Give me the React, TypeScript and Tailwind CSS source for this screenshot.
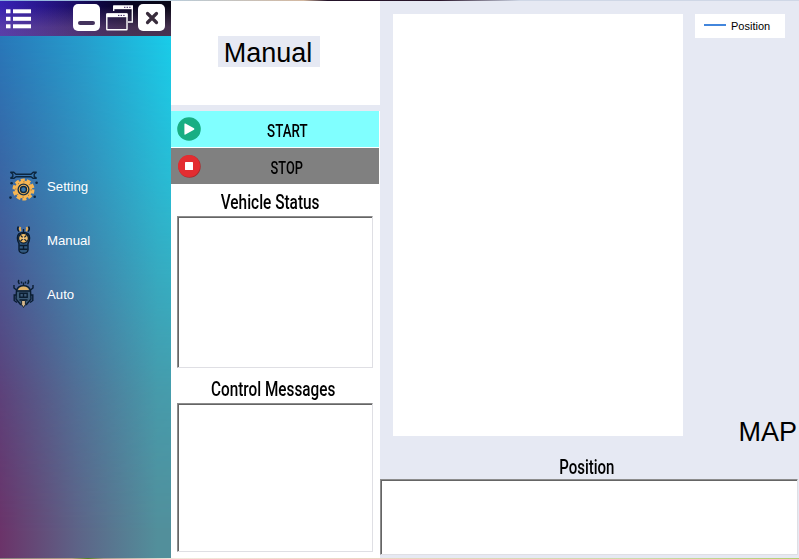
import React from "react";

const sans = "font-['Liberation_Sans',Arial,sans-serif]";

function Condensed({ text, width, scale }: { text: string; width: string; scale: string }) {
  return (
    <span className={`inline-flex justify-center ${width}`}>
      <span className={`whitespace-nowrap font-['Roboto',sans-serif] leading-6 font-medium ${scale}`}>{text}</span>
    </span>
  );
}

function SunkenBox({ size }: { size: string }) {
  return (
    <div
      className={`shrink-0 border border-t-[#8c8c8c] border-l-[#8c8c8c] border-r-[#dfdfe4] border-b-[#dfdfe4] bg-white shadow-[inset_1px_1px_0_#656565] ${size}`}
    />
  );
}

function ListIcon() {
  return (
    <svg width="25" height="20" viewBox="0 0 25 20" fill="white" className="shrink-0">
      {[0, 7.5, 15].map((y) => (
        <g key={y}>
          <rect x="0" y={y + 0.3} width="4.5" height="4" />
          <rect x="7" y={y + 0.3} width="18" height="4" />
        </g>
      ))}
    </svg>
  );
}

function WindowsIcon() {
  return (
    <svg width="27" height="26" viewBox="0 0 27 26" fill="none" stroke="white" className="shrink-0">
      <path d="M7.7 6V1.2H26.3V17H22" strokeWidth="1.3" />
      <path d="M7.5 0.5H27V4.2H7.5Z" fill="white" stroke="none" />
      <path d="M18 2.3h7" stroke="#39205f" strokeWidth="1" strokeDasharray="1.4 1.2" />
      <rect x="0.8" y="9" width="20.2" height="15.8" rx="0.5" strokeWidth="1.4" />
      <path d="M0.5 8.5H21.5V12.2H0.5Z" fill="white" stroke="none" />
      <path d="M12 10.4h7.5" stroke="#39205f" strokeWidth="1" strokeDasharray="1.4 1.2" />
    </svg>
  );
}

function SettingIcon() {
  return (
    <svg width="30" height="30" viewBox="0 0 30 30" fill="none" stroke="#0c263f">
      <path
        d="M1.3 1.2H4.8L7 3.2H22L24.2 1.2H27.7M1.3 7.4H4.8L7 5.8H22L24.2 7.4H27.7M1.3 1.2L3.8 3V5.6L1.3 7.4M27.7 1.2L25.2 3V5.6L27.7 7.4"
        strokeWidth="1.4"
        strokeLinejoin="round"
      />
      <circle cx="14.5" cy="18.5" r="9.3" stroke="#f6b654" strokeWidth="3.4" strokeDasharray="3.9 1.943" />
      <circle cx="14.5" cy="18.5" r="8.9" fill="#f6b654" stroke="none" />
      <circle cx="14.5" cy="18.5" r="7.7" stroke="#84602f" strokeWidth="1" strokeDasharray="1 5" />
      <circle cx="14.5" cy="18.5" r="5.4" stroke="#162e43" strokeWidth="1.3" />
      <circle cx="14.5" cy="18.5" r="3" fill="#3976a9" strokeWidth="1.4" />
      <g fill="#0c263f" stroke="none">
        <circle cx="2.6" cy="12.3" r="1.3" />
        <circle cx="27.6" cy="11.7" r="1.3" />
        <circle cx="1.5" cy="26.6" r="1.3" />
        <circle cx="25.7" cy="25.8" r="1.3" />
      </g>
    </svg>
  );
}

function RemoteIcon() {
  return (
    <svg width="30" height="30" viewBox="0 0 30 30" fill="none" stroke="#0a1c30" strokeWidth="1.4">
      <path d="M9.5 1.5Q7.5 4 10 6.5M19.5 1.5Q21.5 4 19 6.5" />
      <path d="M11.5 2Q10 4 12 6M17.5 2Q19 4 17 6" stroke="#e5ad58" strokeWidth="1.8" />
      <path d="M14.5 4V7" />
      <path d="M10 18.5Q8.4 16 8.4 13Q8.4 7.5 14.5 7.5Q20.6 7.5 20.6 13Q20.6 16 19 18.5V25Q18.5 28.2 14.5 28.2Q10.5 28.2 10 25Z" fill="#31587f" />
      <circle cx="14.5" cy="13.2" r="4.9" fill="#f0bc66" strokeWidth="1.2" />
      <path d="M11.6 10.3L17.4 16.1M17.4 10.3L11.6 16.1" strokeWidth="1.2" />
      <circle cx="14.5" cy="13.2" r="1.3" fill="#f8cf8d" stroke="none" />
      <path d="M10.5 20.5H18.5M14.5 20.5V24M10.5 24.2H18.5" />
    </svg>
  );
}

function RobotIcon() {
  return (
    <svg width="30" height="30" viewBox="0 0 30 30" fill="none" stroke="#0a1d31" strokeWidth="1.4">
      <path d="M10 1Q8.5 3 10.5 5M19 1Q20.5 3 18.5 5M12.5 2.5V4.5M16.5 2.5V4.5M14.5 3.5V7" />
      <path d="M7.5 11.5Q9 6.8 14.5 6.8Q20 6.8 21.5 11.5L22 20L17.5 25.5H11.5L7 20Z" fill="#3c5976" />
      <path d="M8.8 11.3Q10 7.5 14.5 7.5Q19 7.5 20.2 11.3Z" fill="#e0b066" stroke="none" />
      <path d="M7.5 12H21.5M10.8 14.2H18.2V18.3H10.8ZM14.5 14.2V18.3M10.5 21H18.5" />
      <path d="M7.5 11L5 9V6M21.5 11L24 9V6M7 16H5.2V21.5L8 23.5M22 16H23.8V21.5L21 23.5" />
      <path d="M12.6 21.5H16.4V25.5L14.5 28.5L12.6 25.5Z" fill="#d8b88c" strokeWidth="0.9" />
    </svg>
  );
}

const items = [
  { label: "Setting", Icon: SettingIcon },
  { label: "Manual", Icon: RemoteIcon },
  { label: "Auto", Icon: RobotIcon },
];

function Sidebar() {
  return (
    <aside className="flex w-[171px] shrink-0 flex-col">
      <header className="flex h-[35px] shrink-0 items-start bg-[linear-gradient(to_bottom,transparent_15%,#7a568088_75%,#7a568090),linear-gradient(to_right,#1d0a9c,#150764_38%,#07051f_78%,#080615)]">
        <div className="flex h-full w-full bg-[linear-gradient(to_right,#6a50e055,transparent_60%)]">
          <div className="mt-[8px] ml-1.5">
            <ListIcon />
          </div>
          <div className="mt-[3px] ml-[42px] flex h-[27px] w-[27px] items-end justify-center rounded-[5px] bg-white pb-[6px]">
            <div className="h-[4px] w-[17px] rounded-sm bg-[#44335d]" />
          </div>
          <div className="mt-[4px] ml-[6px]">
            <WindowsIcon />
          </div>
          <div className="mt-[3px] ml-[5px] flex h-[27px] w-[27px] items-center justify-center rounded-[5px] bg-white">
            <svg width="14" height="14" viewBox="0 0 14 14" stroke="#382c3c" strokeWidth="3.2" strokeLinecap="round">
              <path d="M2.5 2.5L11.5 11.5M11.5 2.5L2.5 11.5" />
            </svg>
          </div>
        </div>
      </header>
      <div className="grid flex-1 bg-[linear-gradient(to_right,#2878ba,#259fce_50%,#19cdea)]">
        <div className="col-start-1 row-start-1 bg-[linear-gradient(to_right,#6b3369,#5d6387_45%,#528f9b_92%)] [mask-image:linear-gradient(to_bottom,transparent,rgba(0,0,0,0.27)_27%,rgba(0,0,0,0.8)_69%,black_95%)]" />
        <nav className="z-10 col-start-1 row-start-1 flex flex-col gap-6 pt-[135px] pl-[9px]">
          {items.map(({ label, Icon }) => (
            <div key={label} className={`flex h-[30px] items-center gap-2 text-[13.2px] text-white ${sans}`}>
              <Icon />
              <span className="pt-[2px]">{label}</span>
            </div>
          ))}
        </nav>
      </div>
    </aside>
  );
}

export default function App() {
  return (
    <div className={`flex h-[559px] w-[799px] flex-col overflow-hidden bg-[#e6e9f3] text-black ${sans}`}>
      <div className="h-px shrink-0 bg-[linear-gradient(to_right,#88aee0_0,#b7cedf_20%,#d3b8a0_38%,#231329_41%,#29152a_55%,#cfd7e6_65%)]" />
      <div className="flex h-[557px] shrink-0">
        <Sidebar />
        <section className="flex w-[209px] shrink-0 flex-col bg-white">
          <div className="flex h-[104px] shrink-0 items-start pt-[35px] pl-[47px]">
            <h1 className="flex h-[31px] w-[102px] items-center justify-center bg-[#e6e9f3] pt-[3px] pr-[2px] text-[27px]">
              Manual
            </h1>
          </div>
          <div className="h-1.5 shrink-0 bg-[#e6e9f3]" />
          <button className="mb-px flex h-9 w-[208px] shrink-0 items-center bg-[#80ffff] pl-1.5 text-[18px]">
            <svg width="24" height="24" viewBox="0 0 24 24">
              <circle cx="12" cy="12" r="11.8" fill="#18ae83" />
              <path d="M7.4 7Q7.4 6 8.4 6.6L17 11.2Q17.8 12 17 12.8L8.4 17.4Q7.4 18 7.4 17Z" fill="white" />
            </svg>
            <span className="ml-[66px] pt-[4px]">
              <Condensed text="START" width="w-[40px]" scale="scale-x-[0.74]" />
            </span>
          </button>
          <button className="flex h-9 w-[208px] shrink-0 items-center bg-[#808080] pl-1.5 text-[18px]">
            <svg width="24" height="24" viewBox="0 0 24 24">
              <circle cx="12.5" cy="12.5" r="11.2" fill="#aa2a2d" />
              <circle cx="12" cy="12" r="11" fill="#e32d31" />
              <rect x="8" y="8" width="8" height="8" rx="0.6" fill="white" />
            </svg>
            <span className="ml-[69px] pt-[4px]">
              <Condensed text="STOP" width="w-[34px]" scale="scale-x-[0.71]" />
            </span>
          </button>
          <h2 className="flex h-8 shrink-0 justify-center pt-[6px] pr-[11px] text-[20px]">
            <Condensed text="Vehicle Status" width="w-[100px]" scale="scale-x-[0.77]" />
          </h2>
          <div className="pl-1.5">
            <SunkenBox size="h-[152px] w-[196px]" />
          </div>
          <h2 className="flex h-[35px] shrink-0 justify-center pt-[9px] pr-[5px] text-[20px]">
            <Condensed text="Control Messages" width="w-[126px]" scale="scale-x-[0.765]" />
          </h2>
          <div className="pl-1.5">
            <SunkenBox size="h-[149px] w-[196px]" />
          </div>
        </section>
        <main className="flex w-[419px] shrink-0 flex-col">
          <div className="flex h-[435px] shrink-0 pt-[13px] pl-[13px]">
            <div className="h-[422px] w-[290px] shrink-0 bg-white" />
            <div className="ml-3 flex w-[104px] shrink-0 flex-col">
              <div className="flex h-6 w-[90px] shrink-0 items-center bg-white pl-[9px] text-[11px]">
                <span className="h-0.5 w-[22px] -translate-y-px bg-[#4286dc]" />
                <span className="ml-[5px]">Position</span>
              </div>
              <span className="mt-[377px] self-end pr-[2px] text-[27px] leading-[34px]">MAP</span>
            </div>
          </div>
          <h2 className="flex h-[43px] shrink-0 justify-center pt-[19px] pr-[6px] text-[20px]">
            <Condensed text="Position" width="w-[56px]" scale="scale-x-[0.75]" />
          </h2>
          <SunkenBox size="h-[76px] w-[418px]" />
        </main>
      </div>
      <div className="h-px shrink-0 bg-[linear-gradient(to_right,#8a8580_0,#b3a087_9%,#568520_11%,#a8a090_13%,#f2e9dd_22%,#ecd6c4_45%,#cedba9_80%,#b5ce70)]" />
    </div>
  );
}
